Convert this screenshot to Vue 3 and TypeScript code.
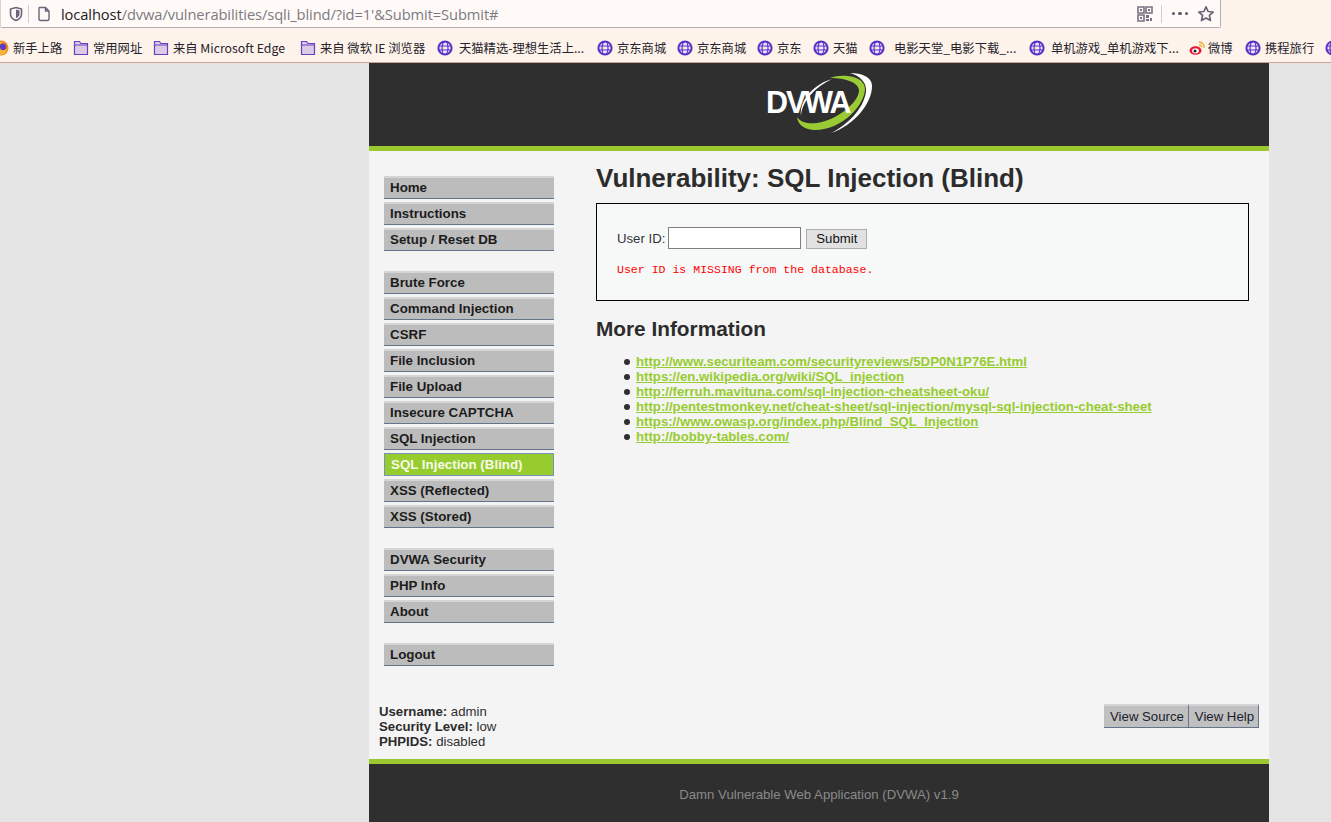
<script setup lang="ts">
interface Bookmark {
  label: string
  icon: 'fox' | 'folder' | 'globe' | 'weibo'
  width: number
  gap?: number
}

const bookmarks: Bookmark[] = [
  { label: '新手上路', icon: 'fox', width: 80 },
  { label: '常用网址', icon: 'folder', width: 80 },
  { label: '来自 Microsoft Edge', icon: 'folder', width: 147 },
  { label: '来自 微软 IE 浏览器', icon: 'folder', width: 137 },
  { label: '天猫精选-理想生活上...', icon: 'globe', width: 160, gap: 6 },
  { label: '京东商城', icon: 'globe', width: 80 },
  { label: '京东商城', icon: 'globe', width: 80 },
  { label: '京东', icon: 'globe', width: 56 },
  { label: '天猫', icon: 'globe', width: 56 },
  { label: '电影天堂_电影下载_...', icon: 'globe', width: 160, gap: 9 },
  { label: '单机游戏_单机游戏下...', icon: 'globe', width: 160, gap: 6 },
  { label: '微博', icon: 'weibo', width: 56, gap: 3 },
  { label: '携程旅行', icon: 'globe', width: 80 },
  { label: '', icon: 'globe', width: 20 },
]

const menuGroups: string[][] = [
  ['Home', 'Instructions', 'Setup / Reset DB'],
  ['Brute Force', 'Command Injection', 'CSRF', 'File Inclusion', 'File Upload', 'Insecure CAPTCHA', 'SQL Injection', 'SQL Injection (Blind)', 'XSS (Reflected)', 'XSS (Stored)'],
  ['DVWA Security', 'PHP Info', 'About'],
  ['Logout'],
]

const links = [
  'http://www.securiteam.com/securityreviews/5DP0N1P76E.html',
  'https://en.wikipedia.org/wiki/SQL_injection',
  'http://ferruh.mavituna.com/sql-injection-cheatsheet-oku/',
  'http://pentestmonkey.net/cheat-sheet/sql-injection/mysql-sql-injection-cheat-sheet',
  'https://www.owasp.org/index.php/Blind_SQL_Injection',
  'http://bobby-tables.com/',
]
</script>

<template>
  <div class="window">
    <div class="chrome">
      <div class="url-row">
        <div class="url-bar">
          <svg class="shield" width="14" height="16" viewBox="0 0 14 16"><path d="M7 1.5 L12.5 3 V8 C12.5 11 10 13.5 7 14.5 C4 13.5 1.5 11 1.5 8 V3 Z" fill="none" stroke="#6b6478" stroke-width="1.6"/><path d="M7 3.5 L10.5 4.5 V8 C10.5 10 9 11.5 7 12.3 Z" fill="#6b6478"/></svg>
          <span class="url-sep"></span>
          <svg class="page-icon" width="14" height="16" viewBox="0 0 14 16"><path d="M2.5 1.5 H8.5 L12 5 V13 A1.5 1.5 0 0 1 10.5 14.5 H3.5 A1.5 1.5 0 0 1 2 13 V2 Z M8.5 1.5 V5 H12" fill="none" stroke="#6b6478" stroke-width="1.4"/></svg>
          <span class="url-text"><span class="host">localhost</span>/dvwa/vulnerabilities/sqli_blind/?id=1'&amp;Submit=Submit#</span>
          <svg class="qr" width="16" height="16" viewBox="0 0 16 16"><path d="M1 1h6v6H1z M9 1h6v6H9z M1 9h6v6H1z" fill="none" stroke="#77727f" stroke-width="1.6"/><path d="M3 3h2v2H3z M11 3h2v2h-2z M3 11h2v2H3z M9 9h3v3H9z M13 12h2v3h-2z M9 13h3v2H9z" fill="#77727f"/></svg>
          <span class="url-sep right"></span>
          <span class="dots"><i></i><i></i><i></i></span>
          <svg class="star" width="18" height="18" viewBox="0 0 18 18"><path d="M9 1.8 L11.1 6.5 L16.2 7 L12.4 10.4 L13.5 15.5 L9 12.9 L4.5 15.5 L5.6 10.4 L1.8 7 L6.9 6.5 Z" fill="none" stroke="#6b6478" stroke-width="1.7" stroke-linejoin="round"/></svg>
        </div>
      </div>
      <div class="bookmarks">
        <div v-for="(b, i) in bookmarks" :key="i" class="bookmark" :style="{ width: b.width + 'px', gap: (b.gap ?? 4) + 'px' }">
          <svg v-if="b.icon === 'fox'" width="16" height="16" viewBox="0 0 16 16"><circle cx="8" cy="8" r="7.5" fill="#f58220"/><circle cx="9.5" cy="7" r="3.5" fill="#5a3fc0"/><path d="M1 6 C3 2 8 1 11 2 C8 3 6 5 7 8 C8 11 12 11 15 8 C14 12 11 15 8 15 C4 15 1 11 1 6Z" fill="#f9b233"/></svg>
          <svg v-else-if="b.icon === 'folder'" width="16" height="16" viewBox="0 0 16 16"><path d="M1.5 1.5 H6.5 L8 3.5 H14.5 V14.5 H1.5 Z" fill="#dccbe6" stroke="#6a3fc4" stroke-width="1.2"/><path d="M1.5 5 H14.5" stroke="#6a3fc4" stroke-width="1"/></svg>
          <svg v-else-if="b.icon === 'globe'" width="16" height="16" viewBox="0 0 16 16"><circle cx="8" cy="8" r="6.6" fill="#efe6f6" stroke="#5a2fc6" stroke-width="2"/><ellipse cx="8" cy="8" rx="3" ry="6.5" fill="none" stroke="#5a2fc6" stroke-width="1.2"/><path d="M1.5 6 H14.5 M1.5 10 H14.5" stroke="#5a2fc6" stroke-width="1.2"/></svg>
          <svg v-else-if="b.icon === 'weibo'" width="16" height="16" viewBox="0 0 16 16"><ellipse cx="6.5" cy="10.5" rx="6" ry="4.3" fill="#e6162d"/><ellipse cx="6.5" cy="10.8" rx="3.4" ry="2.6" fill="#fff"/><circle cx="6" cy="11" r="1.5" fill="#222"/><path d="M10 2 A5 5 0 0 1 15 8 M10 4.8 A2.4 2.4 0 0 1 12.6 7.4" fill="none" stroke="#f5a623" stroke-width="1.3"/></svg>
          <span>{{ b.label }}</span>
        </div>
      </div>
    </div>

    <div class="container">
      <header class="site-header">
        <svg class="logo" width="110" height="66" viewBox="0 0 110 66">
          <path d="M85 3 C97 3 107 7 107 16 C107 34 88 56 66 63 C82 55 98 40 101 22 C102 12 95 6 85 3Z" fill="#fff"/>
          <path d="M65 8 C78 3 100 6 100 19 C100 34 78 60 50 60 C40 60 33 55 32 47 C36 53 44 54 52 53 C72 50 93 33 94 21 C94 12 80 8 65 8Z" fill="#9acb34"/>
          <path d="M67 9 C52 13 34 28 36 46 C37 30 52 16 67 9Z" fill="#fff"/>
          <text x="1" y="43" class="logo-text">DVWA</text>
        </svg>
      </header>

      <div class="body-row">
        <nav class="menu">
          <ul v-for="(group, g) in menuGroups" :key="g" class="menu-group">
            <li v-for="item in group" :key="item" class="menu-item" :class="{ selected: item === 'SQL Injection (Blind)' }">{{ item }}</li>
          </ul>
        </nav>

        <main class="content">
          <h1>Vulnerability: SQL Injection (Blind)</h1>
          <div class="vulnerable-code">
            <form class="id-form" @submit.prevent>
              <label for="uid">User ID:</label>
              <input id="uid" type="text" />
              <button type="submit">Submit</button>
            </form>
            <pre>User ID is MISSING from the database.</pre>
          </div>
          <h2>More Information</h2>
          <ul class="links">
            <li v-for="link in links" :key="link"><a :href="link">{{ link }}</a></li>
          </ul>
        </main>
      </div>

      <div class="status-row">
        <div class="status">
          <div><b>Username:</b> admin</div>
          <div><b>Security Level:</b> low</div>
          <div><b>PHPIDS:</b> disabled</div>
        </div>
        <div class="popup-buttons">
          <span class="popup">View Source</span>
          <span class="popup">View Help</span>
        </div>
      </div>

      <footer class="site-footer">Damn Vulnerable Web Application (DVWA) v1.9</footer>
    </div>
  </div>
</template>

<style>
html, body { margin: 0; background: #e5e5e5; overflow: hidden; }
</style>

<style scoped>
.window {
  width: 1331px;
  height: 822px;
  overflow: hidden;
  font-family: "Liberation Sans", Arial, sans-serif;
  background: #e5e5e5;
}

.chrome {
  height: 63px;
  box-sizing: border-box;
  background: #fdf3ea;
  border-bottom: 1px solid #c9a595;
}
.url-row { height: 29px; }
.url-bar {
  width: 1221px;
  height: 28px;
  box-sizing: border-box;
  background: #fffaf7;
  border: 1px solid #b9aeb6;
  border-top: none;
  border-left-color: #d8d0d4;
  border-radius: 0 0 2px 2px;
  display: flex;
  align-items: center;
  padding: 0 5px 0 8px;
}
.shield { flex: none; }
.url-sep { width: 1px; height: 18px; background: #d3cdd3; margin: 0 8px 0 5px; flex: none; }
.url-sep.right { margin: 0 10px 0 8px; height: 18px; }
.page-icon { flex: none; }
.url-text {
  flex: 1;
  margin-left: 10px;
  font-family: "Open Sans", "Noto Sans", sans-serif;
  font-size: 14.7px;
  letter-spacing: -0.1px;
  color: #7c7a82;
  white-space: nowrap;
}
.host { color: #1c1b22; }
.dots { display: flex; gap: 3px; margin-right: 9px; }
.dots i { width: 3.5px; height: 3.5px; border-radius: 50%; background: #5f5a68; display: block; }

.bookmarks {
  display: flex;
  height: 33px;
  box-sizing: border-box;
  padding-top: 4px;
  align-items: center;
  margin-left: -7px;
  white-space: nowrap;
  overflow: hidden;
  font-family: "Noto Sans CJK SC", "Noto Sans", sans-serif;
  font-size: 12.3px;
  color: #26232d;
}
.bookmark { display: flex; align-items: center; flex: none; overflow: hidden; }
.bookmark svg { flex: none; }

.container {
  width: 900px;
  height: 759px;
  margin-left: 369px;
  display: flex;
  flex-direction: column;
  background: #f4f4f4;
  color: #2f2f2f;
  font-size: 13.2px;
}

.site-header {
  height: 74px;
  flex: none;
  background: #2f2f2f;
  border-bottom: 5px solid #9bc82f;
  display: flex;
  justify-content: center;
  padding-top: 9px;
  box-sizing: content-box;
}
.logo { margin-left: 1px; margin-top: -2px; }
.logo-text {
  font-family: "Liberation Sans", sans-serif;
  font-weight: 700;
  font-size: 30.5px;
  letter-spacing: -2px;
  fill: #fff;
}

.body-row { flex: 1; display: flex; min-height: 0; }

.menu { width: 170px; margin: 25px 0 0 15px; flex: none; }
.menu-group { list-style: none; margin: 0 0 20px; padding: 0; }
.menu-item {
  height: 23px;
  line-height: 20px;
  box-sizing: border-box;
  margin-bottom: 3px;
  padding: 0 0 0 6px;
  background: #bcbcbc;
  border-top: 2px solid #d5d5d5;
  border-bottom: 1px solid #64748b;
  font-size: 13.33px;
  font-weight: 700;
  color: #1c1c1c;
}
.menu-item.selected {
  background: #97cc2f;
  color: #f6fae8;
  border: 1px solid #7a90b8;
  line-height: 21px;
  padding-left: 6px;
}

.content { flex: 1; margin-left: 42px; margin-right: 20px; min-width: 0; }
h1 {
  margin: 12px 0 10px;
  font-size: 26px;
  line-height: 30px;
  font-weight: 700;
  color: #2c2c2c;
}
.vulnerable-code {
  height: 98px;
  box-sizing: border-box;
  background: #f7f9f9;
  border: 1px solid #000;
  padding: 23px 20px 0;
}
.id-form { display: flex; align-items: center; height: 22px; font-size: 13.2px; }
.id-form label { margin-right: 3px; color: #333; }
.id-form input {
  width: 133px;
  height: 22px;
  box-sizing: border-box;
  border: 1px solid #808080;
  background: #fff;
  padding: 0;
  margin-right: 5px;
}
.id-form button {
  width: 61px;
  height: 20px;
  box-sizing: border-box;
  padding: 0;
  border: 1px solid #adadad;
  background: #e1e1e1;
  font: 13.2px "Liberation Sans", Arial, sans-serif;
  color: #111;
  margin-top: 1px;
}
pre {
  margin: 13px 0 0;
  font-family: "Liberation Mono", "Courier New", monospace;
  font-size: 11.55px;
  line-height: 15px;
  color: #ff0000;
}
h2 {
  margin: 16px 0 13px;
  font-size: 20.8px;
  line-height: 24px;
  font-weight: 700;
  color: #2c2c2c;
}
.links { margin: 0; padding: 0 0 0 28px; list-style: none; font-size: 13.2px; line-height: 15px; }
.links li { display: flex; align-items: center; gap: 6px; }
.links li::before { content: ""; width: 6px; height: 6px; border-radius: 50%; background: #2f2f2f; flex: none; }
.links a { color: #97cc2f; font-weight: 700; text-decoration: underline; }

.status-row {
  flex: none;
  height: 63px;
  display: flex;
  justify-content: space-between;
  padding: 8px 10px 0 10px;
  box-sizing: border-box;
}
.status { font-size: 13.2px; line-height: 15px; }
.status b { color: #2c2c2c; }
.popup-buttons { display: flex; height: 24px; }
.popup {
  height: 24px;
  box-sizing: border-box;
  padding: 2px 4px 0 6px;
  line-height: 18px;
  background: #c0c0c0;
  border-top: 2px solid #d5d5d5;
  border-bottom: 1px solid #64748b;
  border-right: 1px solid #64748b;
  font-size: 13.2px;
  color: #1c1c2c;
}

.site-footer {
  flex: none;
  height: 58px;
  background: #2f2f2f;
  border-top: 5px solid #9bc82f;
  text-align: center;
  color: #8a8a8a;
  font-size: 13.2px;
  line-height: 62px;
}
</style>
